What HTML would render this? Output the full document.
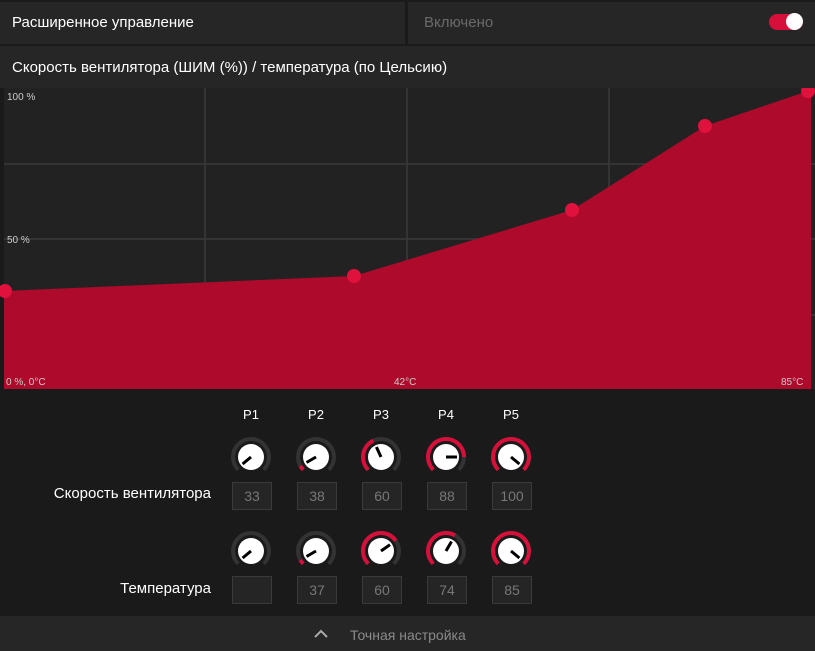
<!DOCTYPE html>
<html><head><meta charset="utf-8"><style>
body{margin:0;width:815px;height:651px;background:#1a1a1a;font-family:"Liberation Sans",sans-serif;overflow:hidden;position:relative;color:#fff}
.a{position:absolute}
.box{position:absolute;width:38px;height:26px;border:1px solid #3a3a3a;background:#252525;color:#777;font-size:14px;text-align:center;line-height:26px;box-sizing:content-box}
.pl{position:absolute;top:407px;font-size:13px;color:#fff;width:40px;text-align:center}
</style></head><body>
<div class="a" style="left:0;top:2px;width:405px;height:42px;background:#262626"></div>
<div class="a" style="left:408px;top:2px;width:407px;height:42px;background:#262626"></div>
<div class="a" style="left:12px;top:14px;font-size:15px">Расширенное управление</div>
<div class="a" style="left:424px;top:14px;font-size:15px;color:#6a6a6a">Включено</div>
<div class="a" style="left:769px;top:14px;width:34px;height:16px;border-radius:8px;background:#d6103a"></div>
<div class="a" style="left:786px;top:13px;width:17px;height:17px;border-radius:50%;background:#fff"></div>
<div class="a" style="left:0;top:46px;width:815px;height:42px;background:#262626"></div>
<div class="a" style="left:12px;top:59px;font-size:15px">Скорость вентилятора (ШИМ (%)) / температура (по Цельсию)</div>
<svg class="a" style="left:0;top:88px" width="815" height="302">
<rect x="4" y="0" width="811" height="301" fill="#222"/>
<g stroke="#3a3a3a" stroke-width="1.5"><line x1="205" y1="0" x2="205" y2="301"/><line x1="407" y1="0" x2="407" y2="301"/><line x1="609" y1="0" x2="609" y2="301"/><line x1="4" y1="76" x2="815" y2="76"/><line x1="4" y1="151" x2="815" y2="151"/><line x1="4" y1="227" x2="815" y2="227"/></g>
<path d="M4 203 L354 188 L572 122 L705 38 L808 3 L811 3 L811 301 L4 301Z" fill="#ae0a2c"/>
<g fill="#e0113d"><circle cx="5" cy="203" r="7"/><circle cx="354" cy="188" r="7"/><circle cx="572" cy="122" r="7"/><circle cx="705" cy="38" r="7"/><circle cx="808" cy="3" r="7"/></g>
<g fill="#ccc" font-size="10" font-family="Liberation Sans"><text x="7" y="12">100 %</text><text x="7" y="155">50 %</text><text x="6" y="297">0 %, 0°C</text><text x="394" y="297">42°C</text><text x="781" y="297">85°C</text></g>
</svg>
<div class="pl" style="left:231px">P1</div><div class="pl" style="left:296px">P2</div><div class="pl" style="left:361px">P3</div><div class="pl" style="left:426px">P4</div><div class="pl" style="left:491px">P5</div>
<svg class="a" style="left:0;top:0" width="815" height="651" overflow="visible">
<g fill="none" stroke="#333" stroke-width="4">
<path d="M238.27 469.73 A18 18 0 1 1 263.73 469.73"/><path d="M303.27 469.73 A18 18 0 1 1 328.73 469.73"/><path d="M368.27 469.73 A18 18 0 1 1 393.73 469.73"/><path d="M433.27 469.73 A18 18 0 1 1 458.73 469.73"/><path d="M498.27 469.73 A18 18 0 1 1 523.73 469.73"/>
<path d="M238.27 563.73 A18 18 0 1 1 263.73 563.73"/><path d="M303.27 563.73 A18 18 0 1 1 328.73 563.73"/><path d="M368.27 563.73 A18 18 0 1 1 393.73 563.73"/><path d="M433.27 563.73 A18 18 0 1 1 458.73 563.73"/><path d="M498.27 563.73 A18 18 0 1 1 523.73 563.73"/>
</g>
<g fill="none" stroke="#d6103a" stroke-width="4">
<path d="M303.27 469.73 A18 18 0 0 1 300.41 466"/>
<path d="M368.27 469.73 A18 18 0 0 1 373.39 440.69"/>
<path d="M433.27 469.73 A18 18 0 1 1 464 457"/>
<path d="M498.27 469.73 A18 18 0 1 1 523.73 469.73"/>
<path d="M303.27 563.73 A18 18 0 0 1 300.41 560"/>
<path d="M368.27 563.73 A18 18 0 1 1 395.74 540.68"/>
<path d="M433.27 563.73 A18 18 0 0 1 455 535.41"/>
<path d="M498.27 563.73 A18 18 0 1 1 523.73 563.73"/>
</g>
<g fill="#fff"><circle cx="251" cy="457" r="13"/><circle cx="316" cy="457" r="13"/><circle cx="381" cy="457" r="13"/><circle cx="446" cy="457" r="13"/><circle cx="511" cy="457" r="13"/><circle cx="251" cy="551" r="13"/><circle cx="316" cy="551" r="13"/><circle cx="381" cy="551" r="13"/><circle cx="446" cy="551" r="13"/><circle cx="511" cy="551" r="13"/></g>
<g stroke="#000" stroke-width="3">
<line x1="251" y1="457" x2="242.6" y2="464"/>
<line x1="316" y1="457" x2="306.5" y2="462.5"/>
<line x1="381" y1="457" x2="376.4" y2="447"/>
<line x1="446" y1="457" x2="457" y2="457"/>
<line x1="511" y1="457" x2="519.4" y2="464"/>
<line x1="251" y1="551" x2="242.6" y2="558"/>
<line x1="316" y1="551" x2="306.5" y2="556.5"/>
<line x1="381" y1="551" x2="390" y2="544.7"/>
<line x1="446" y1="551" x2="451.5" y2="541.5"/>
<line x1="511" y1="551" x2="519.4" y2="558"/>
</g>
</svg>
<div class="a" style="left:0;top:485px;width:211px;text-align:right;font-size:15px">Скорость вентилятора</div>
<div class="a" style="left:0;top:580px;width:211px;text-align:right;font-size:15px">Температура</div>
<div class="box" style="left:232px;top:482px">33</div><div class="box" style="left:297px;top:482px">38</div><div class="box" style="left:362px;top:482px">60</div><div class="box" style="left:427px;top:482px">88</div><div class="box" style="left:492px;top:482px">100</div>
<div class="box" style="left:232px;top:576px"></div><div class="box" style="left:297px;top:576px">37</div><div class="box" style="left:362px;top:576px">60</div><div class="box" style="left:427px;top:576px">74</div><div class="box" style="left:492px;top:576px">85</div>
<div class="a" style="left:0;top:616px;width:815px;height:35px;background:#262626"></div>
<svg class="a" style="left:314px;top:629px" width="14" height="10"><path d="M1 8 L7 2 L13 8" fill="none" stroke="#aaa" stroke-width="2"/></svg>
<div class="a" style="left:350px;top:627px;font-size:14px;color:#8a8a8a">Точная настройка</div>
</body></html>
